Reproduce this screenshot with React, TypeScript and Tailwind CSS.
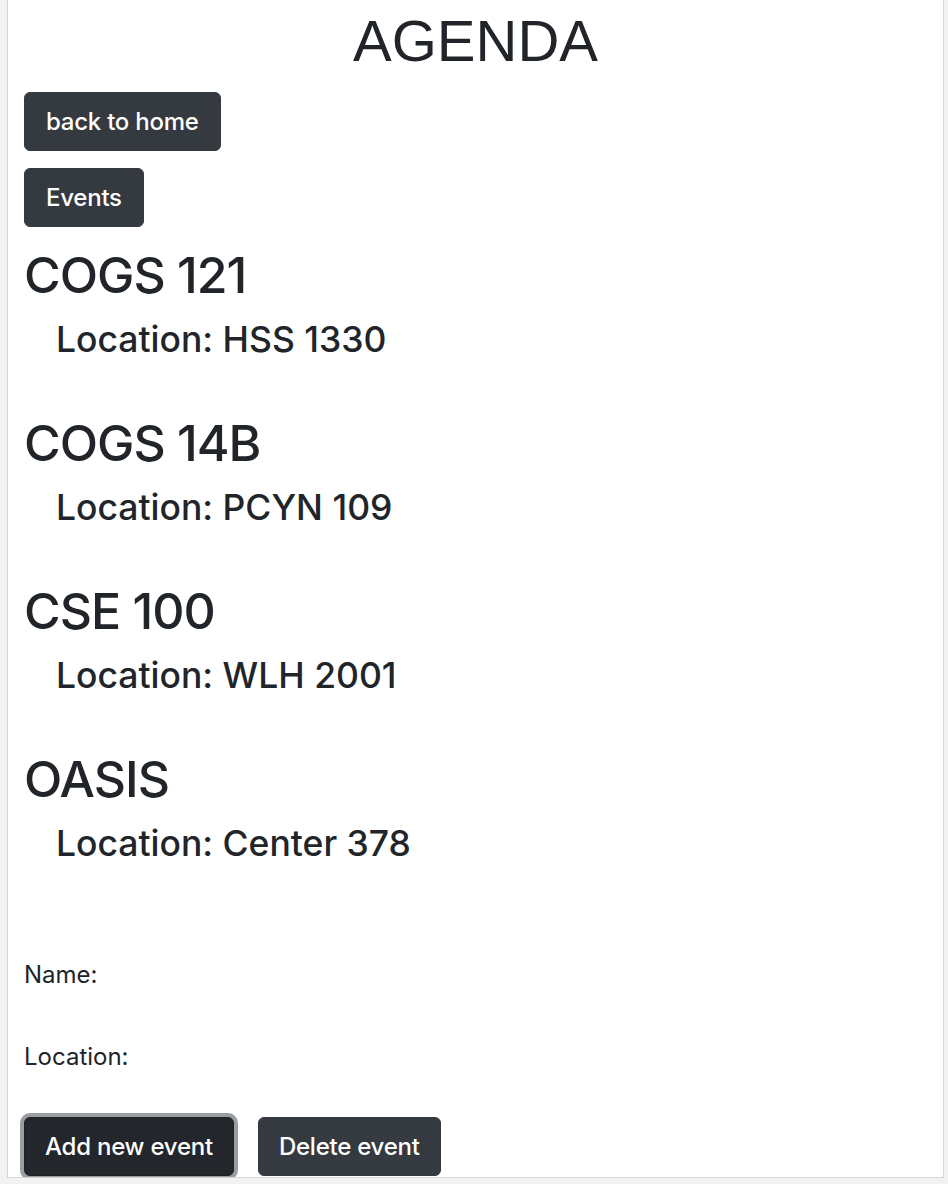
const events = [
  { id: 'cogs121', name: 'COGS 121', location: 'HSS 1330' },
  { id: 'cogs14b', name: 'COGS 14B', location: 'PCYN 109' },
  { id: 'cse100', name: 'CSE 100', location: 'WLH 2001' },
  { id: 'oasis', name: 'OASIS', location: 'Center 378' }
]

const btn =
  'inline-flex items-center h-[59px] px-[21px] rounded-[6px] bg-[#343a40] border border-[#343a40] text-white text-[24px] font-medium tracking-[-0.01em] leading-none'

export default function App () {
  return (
    <main className="min-h-screen bg-[#f2f2f2] font-['Inter',sans-serif] text-[#212529]">
      <div className="ml-[7px] w-[937px] h-[1178px] bg-white border-l border-r border-b border-[#d6d6d6] px-4 overflow-hidden">
        <h1 className="pt-[5px] text-center font-['Liberation_Sans',Arial,sans-serif] text-[58px] leading-[72px]">
          AGENDA
        </h1>

        <div className="mt-[15px] flex flex-col items-start gap-[17px]">
          <button className={btn}>back to home</button>
          <button className={btn}>Events</button>
        </div>

        <section className="mt-[18px]">
          {events.map((ev) => (
            <div key={ev.id} className="mb-[54px]">
              <h2 className="text-[50px] font-medium tracking-[-0.02em] leading-[60px]">{ev.name}</h2>
              <h4 className="mt-[16px] ml-[32px] text-[35.5px] font-medium leading-[38px]">
                Location: {ev.location}
              </h4>
            </div>
          ))}
        </section>

        <form className="mt-[94px]">
          <label className="block text-[24px] leading-[36px]">Name:</label>
          <label className="block mt-[46px] text-[24px] leading-[36px]">Location:</label>
          <div className="mt-[42px] flex gap-[24px]">
            <button
              type="button"
              className="inline-flex items-center h-[59px] px-[20px] rounded-[6px] bg-[#23272b] border border-[#1d2124] text-white text-[24px] font-medium tracking-[-0.01em] leading-none shadow-[0_0_0_4px_rgba(130,134,138,0.8)]"
            >
              Add new event
            </button>
            <button type="button" className="inline-flex items-center h-[59px] px-[20px] rounded-[6px] bg-[#343a40] border border-[#343a40] text-white text-[24px] font-medium tracking-[-0.01em] leading-none">
              Delete event
            </button>
          </div>
        </form>
      </div>
    </main>
  )
}
